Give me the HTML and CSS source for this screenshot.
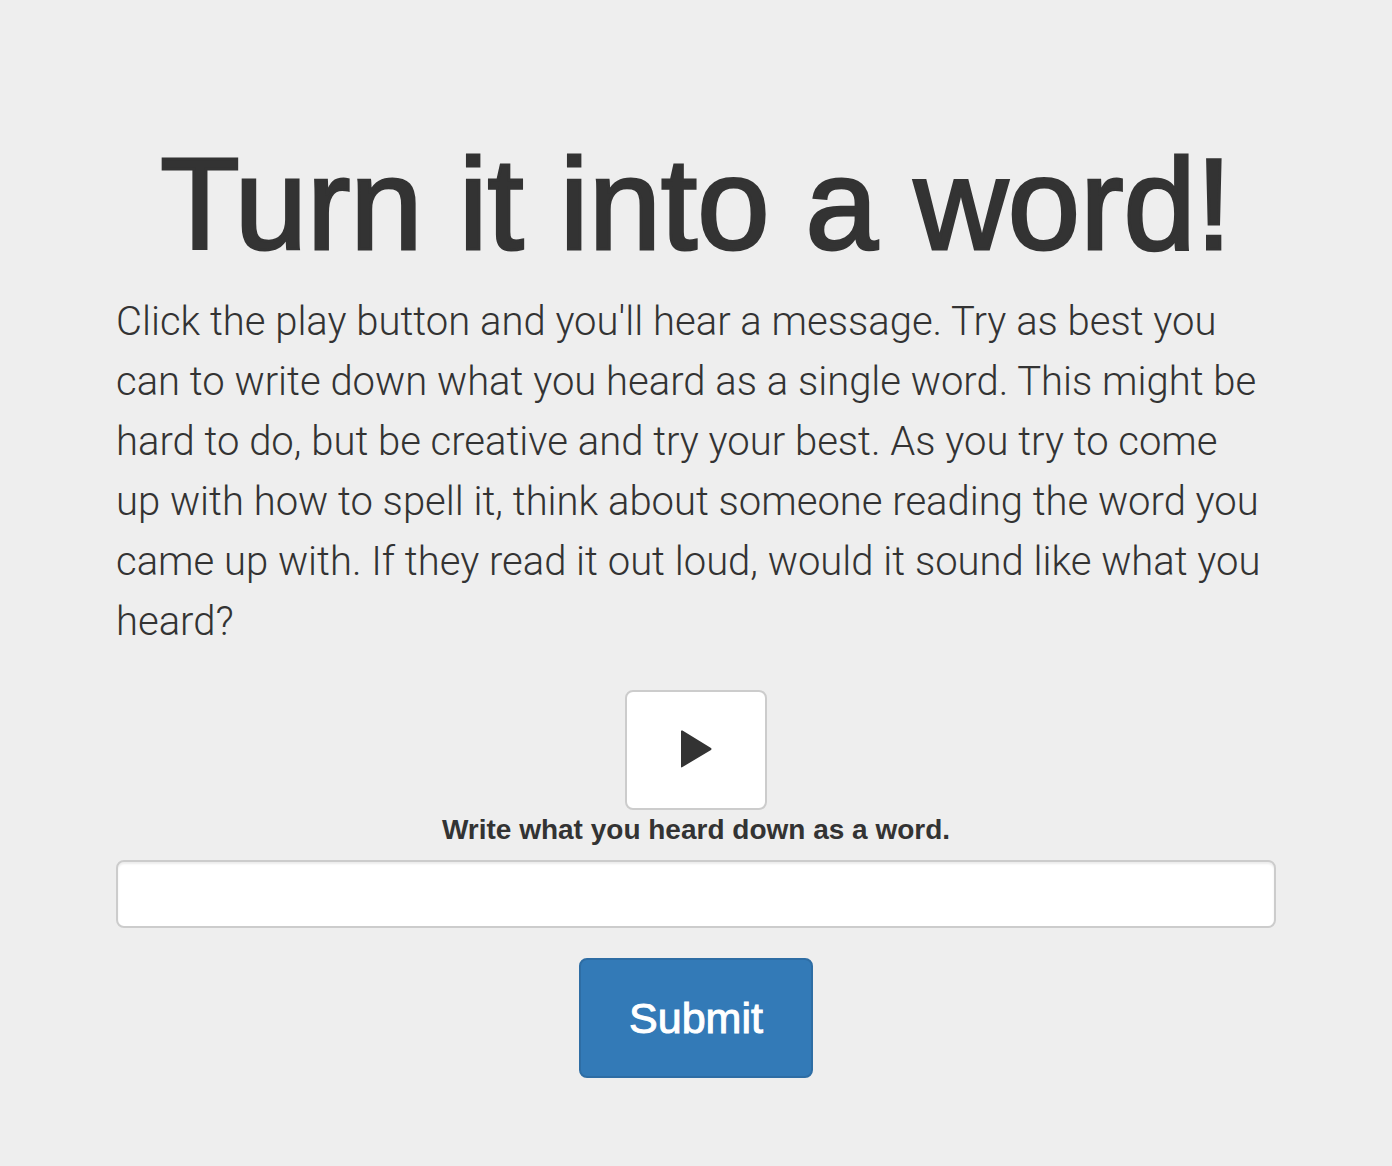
FILE: index.html
```html
<!DOCTYPE html>
<html lang="en">
<head>
  <meta charset="utf-8">
  <meta name="viewport" content="width=device-width, initial-scale=1">
  <title>Turn it into a word!</title>
  <link rel="stylesheet" href="styles.css">
</head>
<body>
  <main class="jumbotron">
    <h1 class="title">Turn it into a word!</h1>
    <p class="lead">
      Click the play button and you'll hear a message. Try as best you<br>
      can to write down what you heard as a single word. This might be<br>
      hard to do, but be creative and try your best. As you try to come<br>
      up with how to spell it, think about someone reading the word you<br>
      came up with. If they read it out loud, would it sound like what you<br>
      heard?
    </p>
    <form class="response">
      <button class="btn btn-play" type="button" aria-label="Play">
        <svg class="icon" viewBox="0 0 32 38" aria-hidden="true"><path d="M1 1Q1 0 2.5 .6L31 18Q32 19 31 20L2.5 37Q1 38 1 36.5Z"/></svg>
      </button>
      <label class="label" for="word">Write what you heard down as a word.</label>
      <input class="field" id="word" type="text">
      <button class="btn btn-submit" type="submit">Submit</button>
    </form>
  </main>
</body>
</html>
```

FILE: styles.css
```css
* {
  box-sizing: border-box;
}

body {
  margin: 0;
  background: #eee;
  color: #333;
  font-family: "Liberation Sans", Arial, sans-serif;
}

.jumbotron {
  padding: 136px 116px 88px;
}

.title {
  margin: 0 0 20px;
  font-size: 130px;
  font-weight: 500;
  line-height: 136px;
  text-align: center;
  white-space: nowrap;
  -webkit-text-stroke: 3px #333;
}

.lead {
  margin: 0 0 38px;
  font-family: Roboto, "Liberation Sans", sans-serif;
  font-size: 40px;
  font-weight: 300;
  line-height: 60px;
}

.response {
  display: flex;
  flex-direction: column;
  align-items: center;
}

.btn {
  display: flex;
  align-items: center;
  justify-content: center;
  height: 120px;
  border: 2px solid #ccc;
  border-radius: 8px;
  font-family: inherit;
  font-size: 43px;
}

.btn-play {
  width: 142px;
  padding-bottom: 4px;
  background: #fff;
  color: #333;
}

.icon {
  width: 32px;
  height: 38px;
  fill: currentColor;
}

.label {
  margin-bottom: 10px;
  font-size: 28px;
  font-weight: 700;
  line-height: 40px;
}

.field {
  width: 100%;
  height: 68px;
  margin-bottom: 30px;
  padding: 12px 24px;
  border: 2px solid #ccc;
  border-radius: 8px;
  background: #fff;
  box-shadow: inset 0 2px 2px rgba(0, 0, 0, 0.075);
  color: #555;
  font-family: inherit;
  font-size: 28px;
}

.btn-submit {
  width: 234px;
  border-color: #2e6da4;
  background: #337ab7;
  color: #fff;
  -webkit-text-stroke: 1px #fff;
}
```
